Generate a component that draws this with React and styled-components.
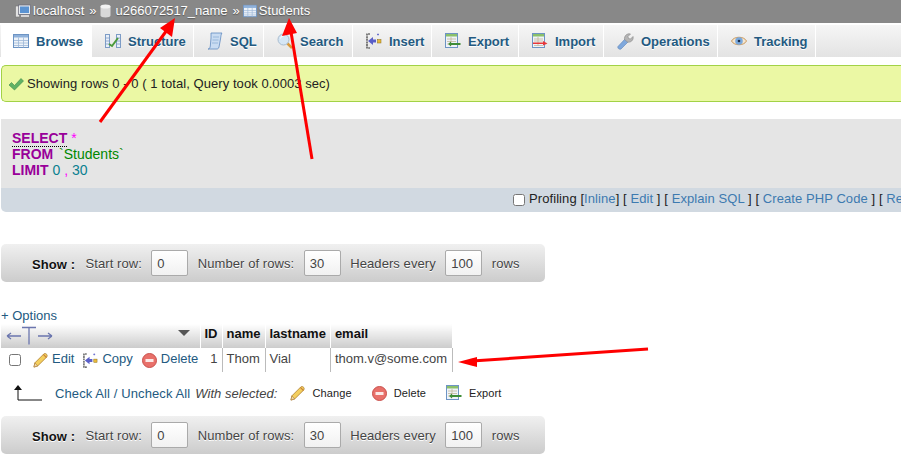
import styled, { createGlobalStyle } from "styled-components";

const GlobalStyle = createGlobalStyle`
  html, body {
    margin: 0;
    padding: 0;
    background: #fff;
    overflow: hidden;
  }

  body {
    font-family: "Liberation Sans", Arial, sans-serif;
    font-size: 13px;
    color: #444;
  }
`;

const ServerIcon = () => (
  <svg width="16" height="16" viewBox="0 0 16 16">
    <rect x="0.5" y="3" width="4" height="11" fill="#e2e2e2" stroke="#777" strokeWidth="0.6" />
    <rect x="3.5" y="2" width="12" height="9.5" fill="#e4e9ee" stroke="#667" strokeWidth="0.7" />
    <rect x="5" y="3.5" width="9" height="6.5" fill="#5a93d2" />
    <rect x="6" y="12" width="8" height="2" fill="#d5d5d5" />
  </svg>
);

const DbIcon = () => (
  <svg width="11" height="14" viewBox="0 0 11 14">
    <path d="M.5 2.5v9c0 1 2.2 2 5 2s5-1 5-2v-9z" fill="#d8d8d8" />
    <ellipse cx="5.5" cy="2.5" rx="5" ry="2" fill="#f2f2f2" />
  </svg>
);

const TableIcon = ({ size = 16 }) => (
  <svg width={size} height={size} viewBox="0 0 16 16">
    <rect x="0.5" y="1.5" width="15" height="13" fill="#eef3f9" stroke="#6d94c4" />
    <rect x="1" y="2" width="14" height="2.5" fill="#8fb1da" />
    <path d="M1 7.5h14M1 10h14M1 12.5h14M5.5 4.5v10M10.500 4.5v10" stroke="#9db8d8" strokeWidth="0.8" fill="none" />
  </svg>
);

const StructureIcon = () => (
  <svg width="16" height="16" viewBox="0 0 16 16">
    <rect x="0.5" y="1.5" width="4" height="13" fill="#e8eff8" stroke="#7d9cc6" />
    <rect x="11.5" y="1.5" width="4" height="13" fill="#e8eff8" stroke="#7d9cc6" />
    <path d="M1 5h3M1 8h3M1 11h3M12 5h3M12 8h3M12 11h3" stroke="#7d9cc6" strokeWidth="0.8" />
    <path d="M4 11l3 2 6-8" stroke="#4b9a3b" strokeWidth="2" fill="none" />
  </svg>
);

const SqlIcon = () => (
  <svg width="16" height="18" viewBox="0 0 16 18">
    <path d="M4 1h11c-1 1-1 3-1.5 6L12 15c-.5 2-1.5 2-3 2H1c1.500 0 2-1 2.300-3L4 6z" fill="#c9dcf2" stroke="#5f8ac0" strokeWidth="0.8" />
    <path d="M6 5h6M5.500 8h6M5 11h6" stroke="#8eafd6" strokeWidth="0.8" />
  </svg>
);

const SearchIcon = () => (
  <svg width="16" height="16" viewBox="0 0 16 16">
    <path d="M10 10l5 5" stroke="#d99a3c" strokeWidth="2.5" />
    <circle cx="6.5" cy="6.5" r="5.5" fill="#d5e6f5" stroke="#a9bccf" />
    <path d="M3.500 5.500a3 3 0 013-2.500" stroke="#fff" fill="none" />
  </svg>
);

const InsertIcon = ({ size = 16 }) => (
  <svg width={size} height={size} viewBox="0 0 16 16">
    <path d="M4 1H1v14h3" stroke="#333" strokeWidth="1.2" fill="none" strokeDasharray="2 .6" />
    <path d="M2 8l5-4v2.500h3v3H7V12z" fill="#5a5fc8" />
    <rect x="11.5" y="6.5" width="3.5" height="3.5" fill="#e8b93a" stroke="#8a6d1a" strokeWidth="0.5" />
    <path d="M11 1.500h2M12 .5v2" stroke="#5a5fc8" strokeWidth="0.8" />
  </svg>
);

const ExportIcon = ({ size = 16 }) => (
  <svg width={size} height={size} viewBox="0 0 16 16">
    <rect x="0.5" y="0.5" width="12" height="14" fill="#eef3f9" stroke="#6d94c4" />
    <rect x="1" y="1" width="11" height="2.5" fill="#8bc06a" />
    <path d="M2 6h9M2 8.500h9M2 11h9M6 4v9" stroke="#c3b69a" strokeWidth="0.8" />
    <path d="M3 11l3-2.500V10h9.500v2H6v1.500z" fill="#3f8c37" />
  </svg>
);

const ImportIcon = () => (
  <svg width="16" height="16" viewBox="0 0 16 16">
    <rect x="0.5" y="0.5" width="12" height="14" fill="#eef3f9" stroke="#6d94c4" />
    <rect x="1" y="1" width="11" height="2.5" fill="#8bc06a" />
    <path d="M2 6h9M2 8h9M2 12.500h9M6 4v9" stroke="#c3b69a" strokeWidth="0.8" />
    <path d="M1 9.500h10V8l4.500 2.500L11 12.500V11H1z" fill="#e8383a" />
  </svg>
);

const WrenchIcon = () => (
  <svg width="17" height="17" viewBox="0 0 17 17">
    <path d="M1 13.500l7-7.500 3 3-7 7c-1.500 1-4-1-3-2.500z" fill="#7fa8dc" stroke="#5d83b8" strokeWidth="0.6" />
    <path d="M7.500 6.500C7 3 10 0 13.500 1L11 3.500l.5 2 2 .5L16 3.500c1 3.500-2.500 6.500-5.500 5.500z" fill="#b5b5b5" stroke="#888" strokeWidth="0.6" />
  </svg>
);

const EyeIcon = () => (
  <svg width="16" height="14" viewBox="0 0 16 14">
    <path d="M.5 7C3 2 13 2 15.500 7 13 12 3 12 .5 7z" fill="#f4e6d0" stroke="#c9985c" />
    <circle cx="8" cy="7" r="3.8" fill="#7aa8dc" />
    <circle cx="8" cy="7" r="1.3" fill="#1c2f4a" />
  </svg>
);

const CheckIcon = () => (
  <svg width="16" height="16" viewBox="0 0 16 16">
    <path d="M1 9l2.500-2.500L6.500 9.500 13 2.500 15.500 5 6.500 14z" fill="#5fb265" stroke="#3d8a46" strokeWidth="0.6" />
  </svg>
);

const PencilIcon = () => (
  <svg width="15" height="15" viewBox="0 0 16 16">
    <path d="M1 15l1-4.500L11.500 1c1-.8 2.500-.4 3.200.6.600.9.500 2-.2 2.800L5 13.800z" fill="#f4cf5e" stroke="#a9782c" strokeWidth="0.8" />
    <path d="M1 15l1-4.500 3 3.300z" fill="#f0d9b0" stroke="#a9782c" strokeWidth="0.6" />
    <path d="M11 1.500l3.500 3.500" stroke="#c8823a" strokeWidth="1.3" />
  </svg>
);

const DeleteIcon = () => (
  <svg width="15" height="15" viewBox="0 0 15 15">
    <circle cx="7.5" cy="7.5" r="7" fill="#e8706a" stroke="#c9504c" />
    <rect x="3.5" y="6" width="8" height="3" fill="#fbe9e7" />
  </svg>
);

const Crumb = ({ icon, gap, children }) => (
  <CrumbItem $gap={gap}>
    {icon}
    <span>{children}</span>
  </CrumbItem>
);

const TABS = [
  { label: "Browse", icon: <TableIcon />, active: true, width: 91 },
  { label: "Structure", icon: <StructureIcon />, width: 101 },
  { label: "SQL", icon: <SqlIcon />, width: 69 },
  { label: "Search", icon: <SearchIcon />, width: 88 },
  { label: "Insert", icon: <InsertIcon />, width: 78 },
  { label: "Export", icon: <ExportIcon />, width: 86 },
  { label: "Import", icon: <ImportIcon />, width: 84 },
  { label: "Operations", icon: <WrenchIcon />, width: 113 },
  { label: "Tracking", icon: <EyeIcon />, width: 97 },
];

const ShowControls = ({ first }) => (
  <ShowBar $first={first}>
    <ShowLabel>Show :</ShowLabel>
    <span>Start row:</span>
    <NumberBox defaultValue="0" />
    <span>Number of rows:</span>
    <NumberBox defaultValue="30" />
    <span>Headers every</span>
    <NumberBox defaultValue="100" />
    <span>rows</span>
  </ShowBar>
);

const App = () => {
  return (
    <Page>
      <GlobalStyle />

      <Breadcrumb>
        <Crumb icon={<ServerIcon />} gap={2}>localhost</Crumb>
        <Sep>»</Sep>
        <Crumb icon={<DbIcon />} gap={5}>u266072517_name</Crumb>
        <Sep>»</Sep>
        <Crumb icon={<TableIcon size={14} />} gap={2}>Students</Crumb>
      </Breadcrumb>

      <TabBar>
        {TABS.map((tab) => (
          <Tab key={tab.label} $active={tab.active} $width={tab.width}>
            {tab.icon}
            {tab.label}
          </Tab>
        ))}
      </TabBar>

      <Message>
        <CheckIcon />
        Showing rows 0 - 0 ( 1 total, Query took 0.0003 sec)
      </Message>

      <SqlBox>
        <SqlLine>
          <Keyword $dotted>SELECT</Keyword> <Punct>*</Punct>
        </SqlLine>
        <SqlLine>
          <Keyword>FROM</Keyword> <TableName>`Students`</TableName>
        </SqlLine>
        <SqlLine>
          <Keyword>LIMIT</Keyword> <Num>0</Num> <Punct>,</Punct> <Num>30</Num>
        </SqlLine>
      </SqlBox>

      <SqlTools>
        <SmallCheck type="checkbox" />
        <ToolsText>
          Profiling [<ToolLink>Inline</ToolLink>] [ <ToolLink>Edit</ToolLink> ] [{" "}
          <ToolLink>Explain SQL</ToolLink> ] [ <ToolLink>Create PHP Code</ToolLink> ] [{" "}
          <ToolLink>Refresh</ToolLink> ]
        </ToolsText>
      </SqlTools>

      <ShowControls first />

      <Options>+ Options</Options>

      <Results>
        <thead>
          <tr>
            <ActionHead>
              <HeadInner>
                <svg width="48" height="20" viewBox="0 0 48 20">
                  <path
                    d="M1 10h14M1 10l4-3M1 10l4 3M16 1.500h14M23 1.500v17M32 10h14M46 10l-4-3M46 10l-4 3"
                    stroke="#6b76ae"
                    strokeWidth="1.3"
                    fill="none"
                  />
                </svg>
                <SortArrow width="12" height="6" viewBox="0 0 12 6">
                  <path d="M0 0h12L6 6z" fill="#555" />
                </SortArrow>
              </HeadInner>
            </ActionHead>
            <HeadCell $width={22}>ID</HeadCell>
            <HeadCell $width={43}>name</HeadCell>
            <HeadCell $width={65}>lastname</HeadCell>
            <HeadCell $width={122}>email</HeadCell>
          </tr>
        </thead>
        <tbody>
          <tr>
            <ActionCell>
              <ActionRow>
                <RowCheck type="checkbox" />
                <RowAction>
                  <PencilIcon />
                  <RowActionText>Edit</RowActionText>
                </RowAction>
                <RowAction>
                  <InsertIcon size={15} />
                  <RowActionText>Copy</RowActionText>
                </RowAction>
                <RowAction>
                  <DeleteIcon />
                  <RowActionText>Delete</RowActionText>
                </RowAction>
              </ActionRow>
            </ActionCell>
            <DataCell $right>1</DataCell>
            <DataCell>Thom</DataCell>
            <DataCell>Vial</DataCell>
            <DataCell>thom.v@some.com</DataCell>
          </tr>
        </tbody>
      </Results>

      <BulkRow>
        <svg width="28" height="16" viewBox="0 0 28 16">
          <path d="M4 4v11h24" stroke="#111" fill="none" />
          <path d="M0 5l4-5 4 5z" fill="#111" />
        </svg>
        <CheckAll>Check All / Uncheck All</CheckAll>
        <em>With selected:</em>
        <BulkAction $first>
          <PencilIcon />
          Change
        </BulkAction>
        <BulkAction>
          <DeleteIcon />
          Delete
        </BulkAction>
        <BulkAction>
          <ExportIcon />
          Export
        </BulkAction>
      </BulkRow>

      <ShowControls />

      <Annotations viewBox="0 0 901 462">
        <path d="M100 122L167 30" stroke="#fe0000" strokeWidth="3" />
        <path d="M175 18L160 28 172 37z" fill="#fe0000" />
        <path d="M312 159L291 32" stroke="#fe0000" strokeWidth="3" />
        <path d="M289 18L282 36 297 33z" fill="#fe0000" />
        <path d="M648 349L472 361" stroke="#fe0000" strokeWidth="3" />
        <path d="M458 362L477 357 477 367z" fill="#fe0000" />
      </Annotations>
    </Page>
  );
};

const Page = styled.div`
  position: relative;
  width: 901px;
  height: 462px;
  overflow: hidden;
`;

const Breadcrumb = styled.div`
  display: flex;
  align-items: center;
  box-sizing: border-box;
  height: 23px;
  padding: 0 0 2px 15px;
  background: #888;
  color: #fff;
  text-shadow: 0 1px 1px #555;
`;

const CrumbItem = styled.span`
  display: flex;
  align-items: center;
  gap: ${(p) => p.$gap}px;
`;

const Sep = styled.span`
  margin: 0 3px 0 5px;
`;

const TabBar = styled.div`
  display: flex;
  gap: 1px;
  height: 32px;
  margin-top: 2px;
  padding-left: 1px;
  background: linear-gradient(#f6f6f6, #e3e3e3);
`;

const Tab = styled.div`
  display: flex;
  align-items: center;
  gap: 7px;
  box-sizing: border-box;
  width: ${(p) => p.$width}px;
  padding-left: 12px;
  font-weight: bold;
  color: #235a81;
  text-shadow: 0 1px 0 #fff;
  border-right: 1px solid #fff;
  background: ${(p) => (p.$active ? "#fff" : "linear-gradient(#f6f6f6, #e3e3e3)")};
`;

const Message = styled.div`
  display: flex;
  align-items: center;
  gap: 3px;
  box-sizing: border-box;
  height: 37px;
  margin: 8px 0 0 1px;
  padding-left: 6px;
  letter-spacing: 0.06px;
  color: #222;
  background: #ebf8a4;
  border: 1px solid #a2d246;
  border-right: 0;
  border-radius: 5px 0 0 5px;
`;

const SqlBox = styled.div`
  box-sizing: border-box;
  height: 69px;
  margin: 17px 0 0 1px;
  padding: 11px 11px 0;
  background: #e5e5e5;
  font-size: 14px;
  line-height: 16px;
`;

const SqlLine = styled.div`
  height: 16px;
`;

const Keyword = styled.span`
  font-weight: bold;
  color: #909;
  border-bottom: ${(p) => (p.$dotted ? "1px dotted #000" : "0")};
`;

const Punct = styled.span`
  color: #f0f;
`;

const TableName = styled.span`
  margin-left: 2px;
  color: #080;
`;

const Num = styled.span`
  color: #0a8090;
`;

const SqlTools = styled.div`
  display: flex;
  align-items: center;
  gap: 4px;
  height: 24px;
  margin-left: 1px;
  padding-left: 512px;
  color: #222;
  white-space: nowrap;
  background: #d1d9e1;
  border-bottom-left-radius: 5px;
`;

const ToolsText = styled.span`
  margin-bottom: 4px;
  letter-spacing: 0.08px;
`;

const ToolLink = styled.a`
  color: #3d7ab0;
`;

const SmallCheck = styled.input`
  width: 12px;
  height: 12px;
  margin: 0;
`;

const RowCheck = styled(SmallCheck)`
  margin-right: 3px;
`;

const ShowBar = styled.div`
  display: flex;
  align-items: center;
  gap: 9.5px;
  box-sizing: border-box;
  width: 544px;
  height: 38px;
  margin: ${(p) => (p.$first ? "32px" : "0")} 0 0 1px;
  padding-left: 31px;
  letter-spacing: 0.07px;
  color: #444;
  text-shadow: 0 1px 0 #fff;
  background: linear-gradient(#f0f0f0, #ccc);
  border-radius: 5px;
`;

const ShowLabel = styled.b`
  margin: 2px 1px 0 0;
  color: #111;
`;

const NumberBox = styled.input`
  box-sizing: border-box;
  width: 37px;
  height: 26px;
  padding: 0 5px;
  font: inherit;
  color: #444;
  background: linear-gradient(#fff, #f1f1f1);
  border: 1px solid #aaa;
  border-radius: 2px;
`;

const Options = styled.div`
  margin: 26px 0 0 1px;
  height: 16px;
  line-height: 16px;
  color: #235a81;
`;

const Results = styled.table`
  margin-left: 1px;
  border-collapse: collapse;
`;

const HeadCell = styled.th`
  box-sizing: border-box;
  width: ${(p) => p.$width}px;
  height: 24px;
  padding: 0 4px 5px;
  text-align: left;
  color: #111;
  background: linear-gradient(#fff, #ccc);
  border-right: 1px solid #fff;

  &:last-child {
    border-right: 0;
  }
`;

const ActionHead = styled(HeadCell)`
  width: 199px;
  padding: 0 10px 0 5px;
`;

const HeadInner = styled.div`
  display: flex;
  align-items: center;
  justify-content: space-between;
`;

const SortArrow = styled.svg`
  margin-bottom: 6px;
`;

const ActionCell = styled.td`
  box-sizing: border-box;
  padding: 0;
  height: 24px;
`;

const ActionRow = styled.div`
  display: flex;
  align-items: center;
  gap: 9px;
  padding-left: 8px;
`;

const RowAction = styled.span`
  display: flex;
  align-items: center;
  gap: 4px;
  color: #235a81;
`;

const RowActionText = styled.span`
  margin-bottom: 4px;
`;

const DataCell = styled.td`
  padding: 0 4px 4px;
  text-align: ${(p) => (p.$right ? "right" : "left")};
  color: #444;
  border-right: 1px solid #bbb;
`;

const BulkRow = styled.div`
  display: flex;
  align-items: center;
  box-sizing: border-box;
  height: 44px;
  padding: 0 0 2px 14px;

  em {
    margin-left: 5px;
    letter-spacing: 0.05px;
    color: #444;
  }
`;

const CheckAll = styled.span`
  margin-left: 13px;
  letter-spacing: 0.1px;
  color: #235a81;
`;

const BulkAction = styled.span`
  display: flex;
  align-items: center;
  gap: 7px;
  margin-left: ${(p) => (p.$first ? "13px" : "20px")};
  font-size: 11px;
  letter-spacing: 0.1px;
  color: #222;
`;

const Annotations = styled.svg`
  position: absolute;
  left: 0;
  top: 0;
  width: 901px;
  height: 462px;
  pointer-events: none;
`;

export default App;
